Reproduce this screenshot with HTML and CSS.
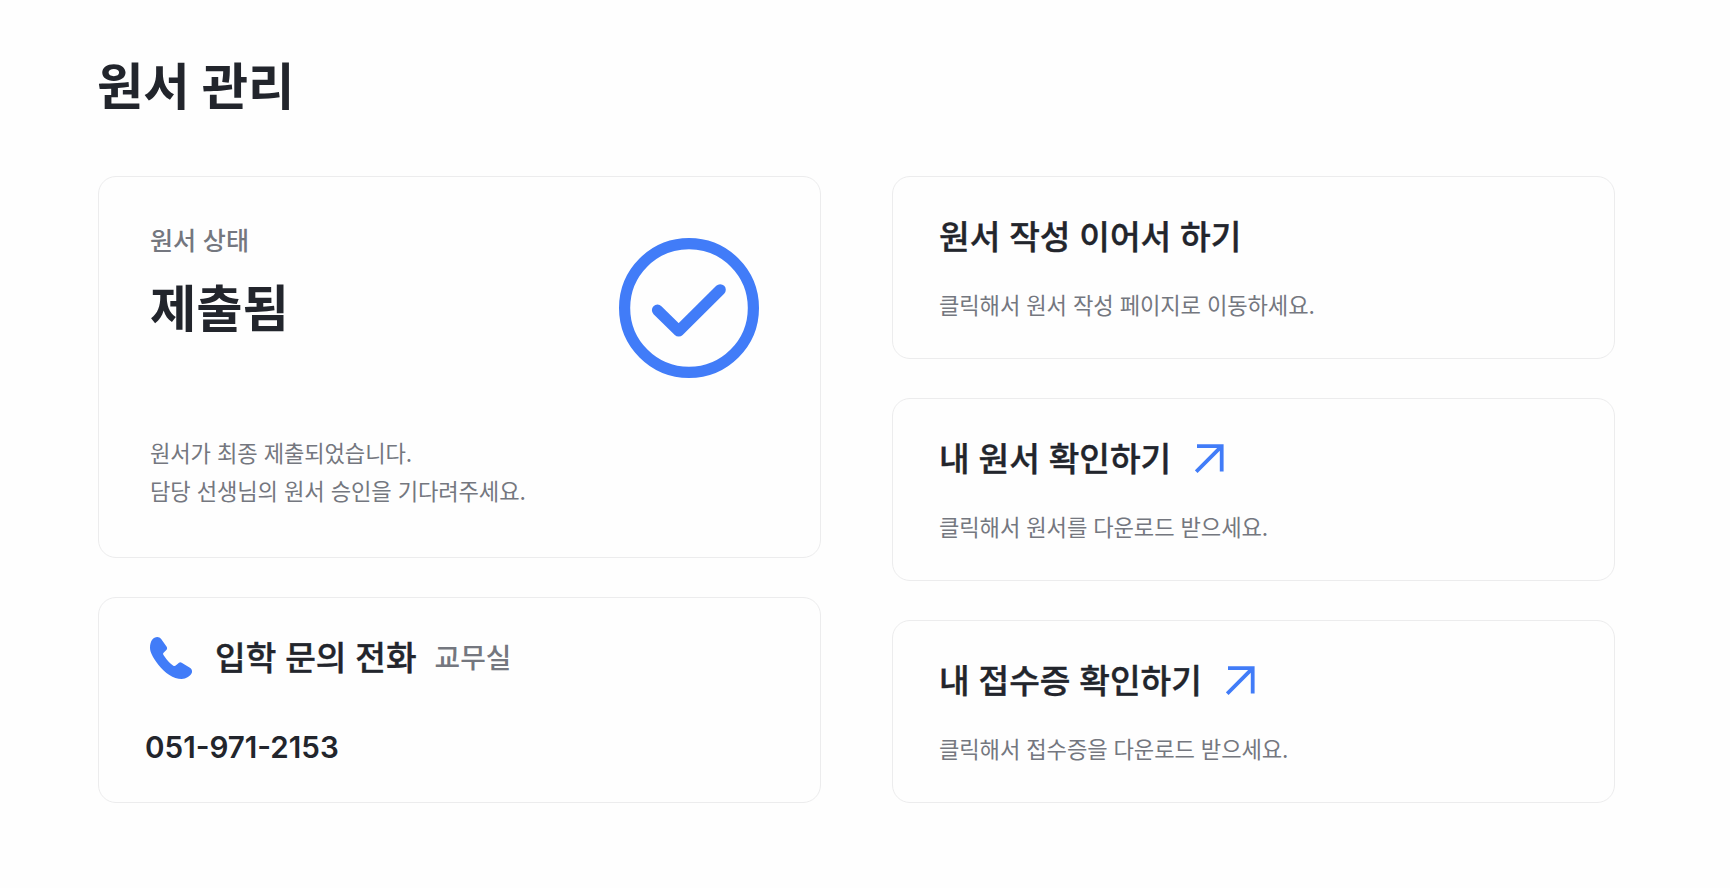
FILE: index.html
```html
<!DOCTYPE html>
<html lang="ko">
<head>
    <meta charset="UTF-8">
    <meta name="viewport" content="width=device-width, initial-scale=1.0">
    <title>원서 관리</title>
    <link rel="stylesheet" href="styles.css">
</head>
<body>
    <main class="page">
        <h1 class="page-title">원서 관리</h1>

        <div class="board">
            <div class="column">
                <section class="card status-card">
                    <div class="status-top">
                        <div>
                            <p class="status-label">원서 상태</p>
                            <strong class="status-value">제출됨</strong>
                        </div>
                        <svg class="status-icon" viewBox="0 0 140 140" fill="none">
                            <circle cx="70" cy="70" r="64.4" stroke="#417cf8" stroke-width="11.2"/>
                            <path d="M38.5 72.2 L59.7 93 L101.2 51.8" stroke="#417cf8" stroke-width="11.2" stroke-linecap="round" stroke-linejoin="round"/>
                        </svg>
                    </div>
                    <p class="description">원서가 최종 제출되었습니다.<br>담당 선생님의 원서 승인을 기다려주세요.</p>
                </section>

                <section class="card phone-card">
                    <div class="phone-head">
                        <svg class="phone-icon" viewBox="0 0 126 126">
                            <path fill="#417cf8" d="M0 32C0 12 10 0 22 0Q29 0 33 5L50 29Q53 35 49 39L40 48Q38 51 41 55Q56 78 70 86Q74 89 79 84L87 77Q91 74 95 77L121 93Q127 97 126 106C122 118 108 126 95 126C70 126 45 108 25 83C8 60 0 45 0 32Z"/>
                        </svg>
                        <h2 class="card-title">입학 문의 전화</h2>
                        <span class="phone-place">교무실</span>
                    </div>
                    <p class="phone-number">051-971-2153</p>
                </section>
            </div>

            <div class="column">
                <a class="card link-card">
                    <h2 class="card-title">원서 작성 이어서 하기</h2>
                    <p class="description">클릭해서 원서 작성 페이지로 이동하세요.</p>
                </a>
                <a class="card link-card">
                    <h2 class="card-title">내 원서 확인하기
                        <svg class="arrow-icon" viewBox="0 0 30 30" fill="none" stroke="#417cf8" stroke-width="3.8">
                            <path d="M2 2.2H26.7V27.5M26.7 2.2L1.2 27.7"/>
                        </svg>
                    </h2>
                    <p class="description">클릭해서 원서를 다운로드 받으세요.</p>
                </a>
                <a class="card link-card">
                    <h2 class="card-title">내 접수증 확인하기
                        <svg class="arrow-icon" viewBox="0 0 30 30" fill="none" stroke="#417cf8" stroke-width="3.8">
                            <path d="M2 2.2H26.7V27.5M26.7 2.2L1.2 27.7"/>
                        </svg>
                    </h2>
                    <p class="description">클릭해서 접수증을 다운로드 받으세요.</p>
                </a>
            </div>
        </div>
    </main>
</body>
</html>
```
FILE: styles.css
```css
* {
    box-sizing: border-box;
    margin: 0;
    padding: 0;
}

body {
    background: #fefefe;
    color: #22252c;
    font-family: Inter, "Noto Sans CJK KR", sans-serif;
}

.page {
    width: 1517px;
    margin-left: 98px;
    padding-top: 50px;
}

.page-title {
    height: 125.5px;
    margin-left: -1px;
    font-size: 50.4px;
    font-weight: 700;
    line-height: 74px;
}

.board {
    display: grid;
    grid-template-columns: 723px 723px;
    column-gap: 71px;
    height: 627.5px;
}

.column {
    display: flex;
    flex-direction: column;
    justify-content: space-between;
}

.card {
    display: block;
    border: 1px solid #ececed;
    border-radius: 18px;
}

.status-card {
    display: flex;
    flex-direction: column;
    justify-content: space-between;
    height: 382px;
    padding: 46px 61px 46px 51px;
}

.status-top {
    display: flex;
    justify-content: space-between;
}

.status-label {
    color: #74777f;
    font-size: 25.1px;
    font-weight: 500;
    line-height: 36px;
}

.status-value {
    display: block;
    margin-top: 14px;
    font-size: 50.3px;
    font-weight: 700;
    line-height: 72px;
}

.status-icon {
    width: 140px;
    height: 140px;
    margin-top: 15px;
}

.description {
    color: #74777f;
    font-size: 22.2px;
    font-weight: 400;
    line-height: 38px;
    letter-spacing: -0.12px;
}

/* the installed hangul face has no 600, so thicken the medium one */
.card-title {
    display: flex;
    align-items: center;
    font-size: 33.3px;
    font-weight: 500;
    line-height: 48px;
    -webkit-text-stroke: 0.4px #22252c;
}

.phone-card {
    height: 206px;
    padding: 36px 46px;
}

.phone-head {
    display: flex;
    align-items: center;
    padding-left: 5px;
}

.phone-icon {
    width: 42px;
    height: 42px;
    margin-right: 23px;
}

.phone-place {
    margin-left: 18px;
    padding-bottom: 4px;
    color: #74777f;
    font-size: 27.8px;
    font-weight: 500;
}

.phone-number {
    margin-top: 45px;
    font-size: 29.6px;
    font-weight: 600;
    line-height: 40px;
}

.link-card {
    height: 183px;
    padding: 36px 46px;
}

.link-card .description {
    margin-top: 26px;
}

.arrow-icon {
    width: 30px;
    height: 30px;
    margin-left: 24px;
}
```
